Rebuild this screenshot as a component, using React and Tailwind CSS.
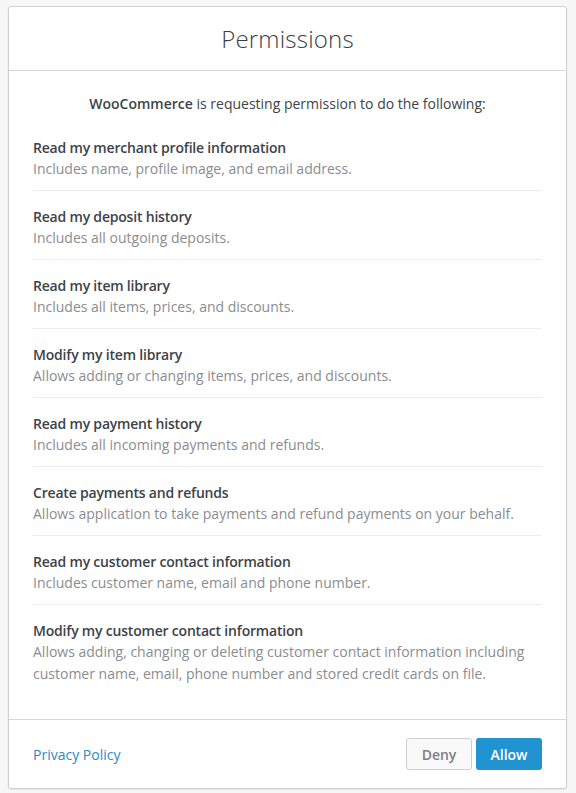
import React from "react";

const items = [
  ["Read my merchant profile information", "Includes name, profile image, and email address."],
  ["Read my deposit history", "Includes all outgoing deposits."],
  ["Read my item library", "Includes all items, prices, and discounts."],
  ["Modify my item library", "Allows adding or changing items, prices, and discounts."],
  ["Read my payment history", "Includes all incoming payments and refunds."],
  ["Create payments and refunds", "Allows application to take payments and refund payments on your behalf."],
  ["Read my customer contact information", "Includes customer name, email and phone number."],
  ["Modify my customer contact information", "Allows adding, changing or deleting customer contact information including customer name, email, phone number and stored credit cards on file."],
];

export default function App() {
  return (
    <div className="min-h-[793px] w-[576px] bg-[#f7f7f7] pt-[6px] pl-[8px]" style={{ fontFamily: "'Open Sans', sans-serif" }}>
      <div className="w-[559px] h-[783px] bg-white border border-[#d0d0d0] rounded-[3px] shadow-[0_1px_2px_rgba(0,0,0,0.08)] flex flex-col">
        <div className="h-[64px] border-b border-[#d6d6d6] flex items-center justify-center">
          <h1 className="text-[24px] font-light text-[#3c4043] tracking-[0.2px]">Permissions</h1>
        </div>
        <div className="flex-1 px-[24px] pt-[23px]">
          <p className="text-center text-[14px] leading-[20px] text-[#3d4349]">
            <span className="font-semibold">WooCommerce</span> is requesting permission to do the following:
          </p>
          <div className="mt-[8px]">
            {items.map(([t, d], i) => (
              <div key={i} className={`pt-[16px] pb-[10px] ${i < items.length - 1 ? "border-b border-[#ececec]" : ""}`}>
                <div className="text-[14px] leading-[20px] font-semibold text-[#3d4349] tracking-[-0.2px]">{t}</div>
                <div className="text-[14px] leading-[22px] text-[#8a8d90]">{d}</div>
              </div>
            ))}
          </div>
        </div>
        <div className="h-[69px] border-t border-[#d6d6d6] flex items-center justify-between px-[24px]">
          <a className="text-[14px] text-[#2b8ac6]">Privacy Policy</a>
          <div className="flex gap-[4px]">
            <button className="w-[66px] h-[32px] rounded-[3px] border border-[#cfcfcf] bg-[#f9f9f9] text-[14px] font-semibold text-[#7c7f82]">Deny</button>
            <button className="w-[66px] h-[32px] rounded-[3px] bg-[#2293d1] text-[14px] font-semibold text-white">Allow</button>
          </div>
        </div>
      </div>
    </div>
  );
}
